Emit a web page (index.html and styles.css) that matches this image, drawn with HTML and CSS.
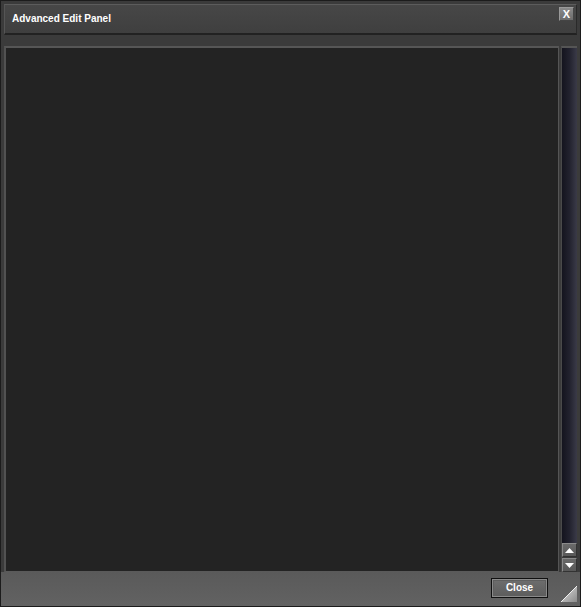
FILE: index.html
```html
<!DOCTYPE html>
<html>
<head>
<meta charset="utf-8">
<link rel="stylesheet" href="styles.css">
</head>
<body>
<div class="window">
  <div class="titlebar">
    <span class="title">Advanced Edit Panel</span>
    <button class="xbtn">X</button>
  </div>
  <div class="middle">
    <div class="content"></div>
    <div class="scrollbar">
      <div class="track"></div>
      <button class="sbtn up"><svg width="9" height="5" viewBox="0 0 9 5"><polygon points="0,5 4.5,0 9,5" fill="#fff"/></svg></button>
      <button class="sbtn down"><svg width="9" height="5" viewBox="0 0 9 5"><polygon points="0,0 4.5,5 9,0" fill="#fff"/></svg></button>
    </div>
  </div>
  <div class="footer">
    <button class="closebtn">Close</button>
    <div class="grip"><svg width="16" height="16" viewBox="0 0 16 16"><defs><linearGradient id="g" x1="0" y1="0" x2="1" y2="1"><stop offset="0" stop-color="#e0e0e0"/><stop offset="1" stop-color="#8a8a8a"/></linearGradient></defs><polygon points="16,0 16,16 0,16" fill="url(#g)"/><polyline points="0,16 16,0" stroke="#f0f0f0" stroke-width="1" fill="none"/></svg></div>
  </div>
</div>
</body>
</html>
```

FILE: styles.css
```css
* { box-sizing: border-box; }
html, body { margin: 0; padding: 0; background: #2a2a2a; }
body { width: 581px; height: 607px; overflow: hidden; font-family: "Liberation Sans", Arial, sans-serif; }
.window {
  width: 581px; height: 607px;
  background: #3b3b3b;
  border: 1px solid #1c1c1c;
  display: flex; flex-direction: column;
  padding: 3px 3px 0 3px;
}
.titlebar {
  height: 31px;
  flex: none;
  background: linear-gradient(#474747, #3f3f3f);
  border-top: 1px solid #5c5c5c;
  border-left: 1px solid #555;
  border-right: 1px solid #2a2a2a;
  border-bottom: 2px solid #222;
  display: flex; align-items: flex-start; justify-content: space-between;
  padding: 8px 2px 0 7px;
}
.title { color: #fff; font-weight: bold; font-size: 10px; line-height: 12px; }
.xbtn {
  margin: -6px 0 0 0;
  width: 15px; height: 14px; padding: 0;
  background: linear-gradient(#8a8a8a, #6c6c6c);
  border: 1px solid #9a9a9a;
  border-right-color: #444; border-bottom-color: #444;
  color: #fff; font: bold 11px/12px "Liberation Sans", Arial, sans-serif;
  text-align: center;
}
.middle {
  flex: 1;
  margin-top: 11px;
  display: flex; gap: 2px;
}
.content {
  flex: 1;
  background: #232323;
  border-top: 2px solid #565656;
  border-left: 2px solid #525252;
  border-right: 1px solid #555;
  border-bottom: 1px solid #5a5a5a;
}
.scrollbar {
  width: 16px; flex: none;
  display: flex; flex-direction: column;
  border-top: 2px solid #555;
  border-left: 1px solid #4a4a4a;
}
.track {
  flex: 1;
  background: linear-gradient(90deg, #14141e, #22222e 50%, #3a3a48);
}
.sbtn {
  height: 14px; width: 15px; padding: 0;
  background: linear-gradient(#6a6a6a, #585858);
  border: 1px solid #8a8a8a;
  border-right-color: #333; border-bottom-color: #333;
  display: flex; align-items: center; justify-content: center;
}
.sbtn.down { margin-top: 1px; }
.footer {
  height: 34px; flex: none;
  margin: 0 -3px;
  background: linear-gradient(#5a5a5a, #626262);
  display: flex; align-items: flex-start; justify-content: flex-end;
  padding: 6px 3px 0 0;
}
.closebtn {
  width: 57px; height: 20px; padding: 0;
  border: 1px solid #111;
  box-shadow: inset 0 0 0 1px #8a8a8a, inset 0 0 0 2px #5e5e5e;
  background: linear-gradient(#6e6e6e, #5c5c5c);
  color: #fff; font: bold 10px/18px "Liberation Sans", Arial, sans-serif;
  margin-right: 13px;
}
.grip { width: 16px; height: 16px; margin-top: 8px; }
.grip svg { display: block; }
```
